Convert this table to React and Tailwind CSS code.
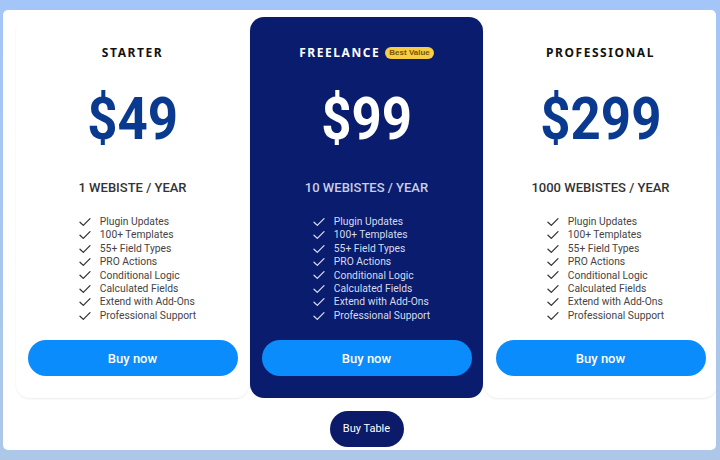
import React from "react";

const FEATURES = [
  "Plugin Updates",
  "100+ Templates",
  "55+ Field Types",
  "PRO Actions",
  "Conditional Logic",
  "Calculated Fields",
  "Extend with Add-Ons",
  "Professional Support",
];

const PLANS = [
  { name: "STARTER", price: "$49", sites: "1 WEBISTE / YEAR" },
  { name: "FREELANCE", price: "$99", sites: "10 WEBISTES / YEAR", featured: true },
  { name: "PROFESSIONAL", price: "$299", sites: "1000 WEBISTES / YEAR" },
];

function Check({ className }) {
  return (
    <svg viewBox="0 0 12 10" className={className} fill="none" stroke="currentColor" strokeWidth="1.3" strokeLinecap="round" strokeLinejoin="round">
      <path d="M1 5.2 L4.3 8.4 L11 1.6" />
    </svg>
  );
}

function PlanCard({ plan }) {
  const f = plan.featured;
  return (
    <div
      className={[
        "w-[233px] shrink-0 rounded-[14px] flex flex-col items-center pt-[28px] pb-[22px] px-[11px]",
        f ? "bg-[#0a1c6e] text-white" : "bg-white shadow-[0_1px_2px_rgba(0,0,0,0.08)]",
      ].join(" ")}
    >
      <div className="flex items-center gap-[5px] h-[16px]">
        <span className={["text-[12px] font-bold tracking-[0.13em]", f ? "text-white" : "text-[#111]"].join(" ")} style={{ fontFamily: "'Noto Sans', sans-serif" }}>
          {plan.name}
        </span>
        {f && (
          <span className="rounded-full bg-[#f6cd45] text-[#7a5600] text-[8px] font-semibold px-[4px] leading-[12px]" style={{ fontFamily: "'Liberation Sans', sans-serif" }}>
            Best Value
          </span>
        )}
      </div>
      <div
        className={["mt-[22px] text-[60px] font-bold leading-[72px] scale-x-[0.88]", f ? "text-white" : "text-[#0a3a8f]"].join(" ")}
        style={{ fontFamily: "Roboto, sans-serif" }}
      >
        {plan.price}
      </div>
      <div
        className={["mt-[24px] text-[13px] font-medium leading-[18px]", f ? "text-[#c9cfe4]" : "text-[#333]"].join(" ")}
        style={{ fontFamily: "Roboto, sans-serif" }}
      >
        {plan.sites}
      </div>
      <ul className="mt-[18px] w-fit mx-auto pl-[10px]" style={{ fontFamily: "Roboto, sans-serif" }}>
        {FEATURES.map((t) => (
          <li key={t} className={["flex items-center gap-[9px] text-[10.3px] leading-[13.4px]", f ? "text-[#d5dbef]" : "text-[#444]"].join(" ")}>
            <Check className={["w-[12px] h-[10px]", f ? "text-[#d5dbef]" : "text-[#333]"].join(" ")} />
            <span>{t}</span>
          </li>
        ))}
      </ul>
      <button
        className="mt-[18px] w-[210px] h-[36px] rounded-full bg-[#0a8cfd] text-white text-[13px] font-medium"
        style={{ fontFamily: "Roboto, sans-serif" }}
      >
        Buy now
      </button>
    </div>
  );
}

export default function App() {
  return (
    <div className="w-[720px] h-[460px] bg-gradient-to-b from-[#a3c5f8] to-[#adc7e8] pt-[10px] px-[3px] overflow-hidden">
      <div className="w-[713px] h-[440px] bg-white rounded-[5px] overflow-hidden pl-[13px] pt-[7px]">
        <div className="w-[701px]">
          <div className="flex gap-[1px] items-start">
            {PLANS.map((p) => (
              <PlanCard key={p.name} plan={p} />
            ))}
          </div>
          <div className="flex justify-center mt-[13px]">
            <button
              className="h-[36px] w-[74px] rounded-full bg-[#0c1a6a] text-white text-[11px]"
              style={{ fontFamily: "Roboto, sans-serif" }}
            >
              Buy Table
            </button>
          </div>
        </div>
      </div>
    </div>
  );
}
